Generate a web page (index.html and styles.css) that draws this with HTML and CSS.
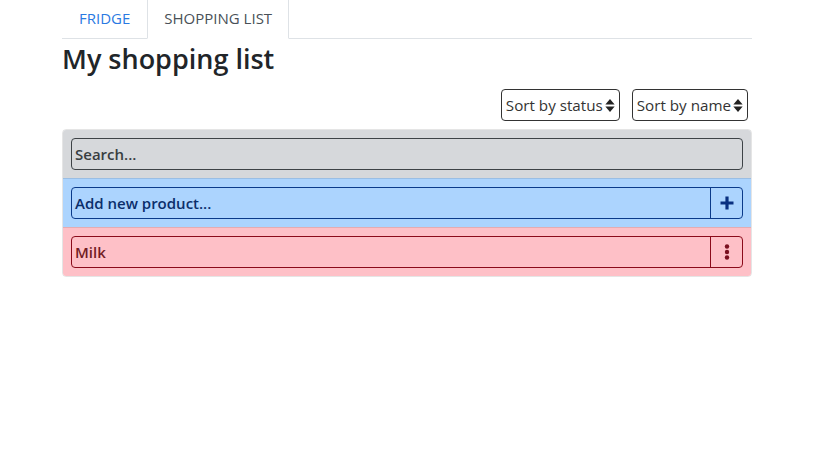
FILE: index.html
```html
<!DOCTYPE html>
<html>
<head>
<meta charset="utf-8">
<link rel="stylesheet" href="styles.css">
</head>
<body>
<div class="container">
  <nav class="tabs">
    <a class="tab">FRIDGE</a>
    <a class="tab active">SHOPPING LIST</a>
  </nav>
  <h1 class="title">My shopping list</h1>
  <div class="sorts">
    <div class="select">Sort by status<svg class="sort-ic" viewBox="0 0 10 14" width="10" height="13"><path d="M5 0 L10 6 H0 Z" fill="#222"/><path d="M0 8 H10 L5 14 Z" fill="#222"/></svg></div>
    <div class="select">Sort by name<svg class="sort-ic" viewBox="0 0 10 14" width="10" height="13"><path d="M5 0 L10 6 H0 Z" fill="#222"/><path d="M0 8 H10 L5 14 Z" fill="#222"/></svg></div>
  </div>
  <div class="list">
    <div class="row row-gray">
      <div class="field"><span class="field-text">Search...</span></div>
    </div>
    <div class="row row-blue">
      <div class="field"><span class="field-text">Add new product...</span>
        <span class="btn"><svg viewBox="0 0 14 14" width="14" height="14"><path d="M7 0.5 V13.5 M0.5 7 H13.5" stroke="#0a3080" stroke-width="3.2"/></svg></span>
      </div>
    </div>
    <div class="row row-red">
      <div class="field"><span class="field-text">Milk</span>
        <span class="btn"><svg viewBox="0 0 6 16" width="6" height="16"><circle cx="3" cy="2.5" r="2.2" fill="#7a1020"/><circle cx="3" cy="8" r="2.2" fill="#7a1020"/><circle cx="3" cy="13.5" r="2.2" fill="#7a1020"/></svg></span>
      </div>
    </div>
  </div>
</div>
</body>
</html>
```
FILE: styles.css
```css
* { box-sizing: border-box; }
body {
  margin: 0;
  font-family: "Open Sans", "Noto Sans", sans-serif;
  color: #212529;
  background: #fff;
}
.container {
  width: 690px;
  margin: 0 auto 0 62px;
}
.tabs {
  display: flex;
  border-bottom: 1px solid #dee2e6;
}
.tab {
  display: block;
  padding: 6px 16px 8px;
  font-size: 15px;
  line-height: 24px;
  color: #2a7ae2;
  border: 1px solid transparent;
  border-top: 0;
  margin-bottom: -1px;
}
.tab.active {
  color: #495057;
  border-color: #dee2e6;
  border-bottom-color: #fff;
  background: #fff;
}
.title {
  margin: 3px 0 0;
  font-size: 27px;
  font-weight: 600;
  line-height: 34px;
}
.sorts {
  display: flex;
  justify-content: flex-end;
  gap: 12px;
  padding-right: 4px;
  margin-top: 13px;
}
.select {
  display: flex;
  align-items: center;
  height: 32px;
  padding: 0 4px;
  border: 1px solid #333;
  border-radius: 4px;
  font-size: 15.2px;
  color: #333;
}
.sort-ic { margin-left: 2px; }
.list {
  margin-top: 8px;
  border: 1px solid rgba(0,0,0,.1);
  border-radius: 4px;
  overflow: hidden;
}
.row {
  padding: 8px 8px;
  border-top: 1px solid rgba(0,0,0,.1);
}
.row:first-child { border-top: 0; }
.row-gray { background: #d6d8db; color: #383d41; }
.row-blue { background: #acd4fe; color: #0b2e6b; }
.row-red { background: #fec0c7; color: #721c24; }
.field {
  display: flex;
  align-items: stretch;
  height: 32px;
  border: 1px solid currentColor;
  border-radius: 4px;
}
.row-gray .field { border-color: #3d4246; }
.row-blue .field { border-color: #0a3a8a; }
.row-red .field { border-color: #8b0a1a; }
.field-text {
  flex: 1;
  display: flex;
  align-items: center;
  padding-left: 3px;
  font-size: 15px;
  font-weight: 600;
}
.btn {
  width: 32px;
  display: flex;
  align-items: center;
  justify-content: center;
  border-left: 1px solid currentColor;
}
.row-blue .btn { border-color: #0a3a8a; }
.row-red .btn { border-color: #8b0a1a; }
```
